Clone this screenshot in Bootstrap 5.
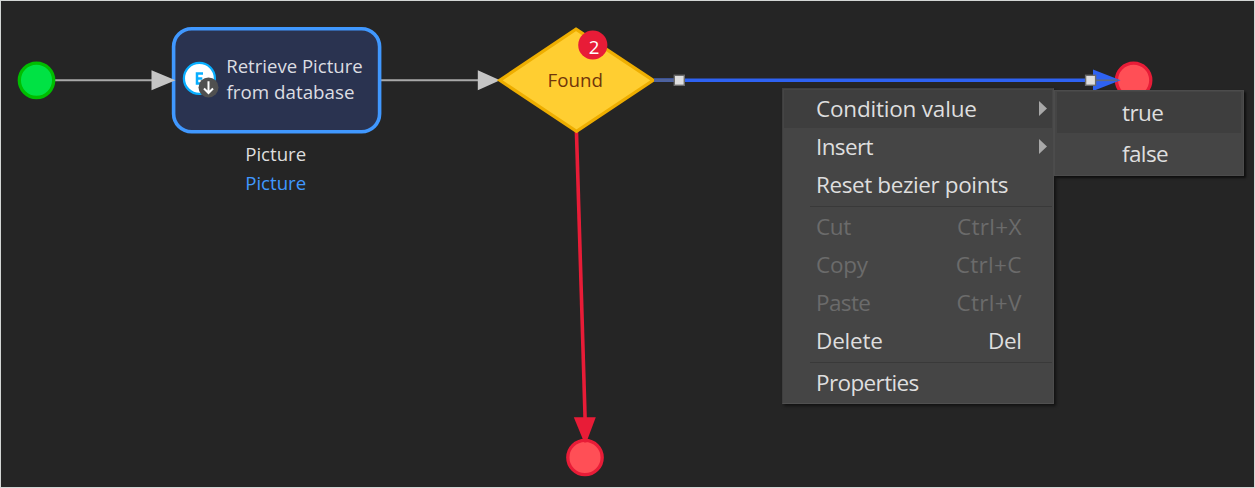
<!DOCTYPE html>
<html lang="en">
<head>
<meta charset="utf-8">
<meta name="viewport" content="width=device-width, initial-scale=1">
<title>Microflow editor</title>
<link rel="stylesheet" href="https://cdn.jsdelivr.net/npm/bootstrap@5.3.0/dist/css/bootstrap.min.css">
<style>
  body { background: #252525; font-family: "Open Sans", "Noto Sans", sans-serif; }
  .canvas { width: 1255px; height: 488px; background: #252525; border: 1px solid #d3d6d5; }
  .flow { left: -1px; top: -1px; }
  .flow text { font-size: 18.7px; }
  .ctx-menu { background: #454545; border: 1px solid #3e3e3e; border-right-color: #4c4c4c; border-bottom-color: #505050; box-shadow: 2px 2px 3px rgba(0,0,0,.55); color: #dedede; font-size: 22.5px; line-height: 1; }
  .ctx-main { left: 781px; top: 87px; width: 272px; height: 316px; padding: 1px; }
  .ctx-sub { left: 1053px; top: 89px; width: 190px; height: 86px; padding: 1px 2px; border-color: #4c4c4c; box-shadow: 2px 2px 2px rgba(0,0,0,.6); }
  .ctx-item { height: 37.8px; padding: 0 30.5px 0 32px; white-space: nowrap; letter-spacing: -.4px; }
  .ctx-sub .ctx-item { height: 41.3px; padding-left: 65px; }
  .ctx-item span { padding-top: 1.2px; }
  .ctx-item.hot { background: #3e3e3e; }
  .ctx-item.off { color: #6b6b6b; }
  .ctx-item.parent { padding-right: 5.5px; }
  .ctx-item .keys { letter-spacing: .3px; margin-right: -.2px; }
  .ctx-item .snug { letter-spacing: -.62px; }
  .ctx-item .loose { letter-spacing: -.2px; }
  .ctx-rule { height: 5px; margin-left: 26px; background: linear-gradient(#393939, #393939) 0 2.5px / 100% 1px no-repeat; }
</style>
</head>
<body>
<main class="canvas position-relative overflow-hidden">
  <svg class="flow position-absolute" width="1255" height="488" viewBox="0 0 1255 488">
    <!-- sequence flows -->
    <g stroke="#a9a9a9" stroke-width="2"><path d="M54 80.3H153M380 80.3H480"/></g>
    <circle cx="36.5" cy="80.3" r="17.2" fill="#00e244" stroke="#00bd00" stroke-width="3.3"/>
    <rect x="173.6" y="28.7" width="206" height="103" rx="18" fill="#2a3350" stroke="#4098ff" stroke-width="3.6"/>
    <path d="M151.5 70.2V90.2L175.5 80.3ZM477.8 70.2V90.2L500 80.3Z" fill="#c5c5c5"/>
    <!-- retrieve activity -->
    <circle cx="199.4" cy="78.4" r="15.5" fill="#fff" stroke="#08aeff" stroke-width="2.3"/>
    <path d="M203 73.6H197V83.4H203M197 78.5H202.3" fill="none" stroke="#08aeff" stroke-width="2.5"/>
    <circle cx="208.5" cy="87.4" r="10" fill="#505050"/>
    <path d="M208.5 81.2V92.5M204 88.5L208.5 93L213 88.5" fill="none" stroke="#fff" stroke-width="2"/>
    <text x="226.2" y="73.3" textLength="136.5" lengthAdjust="spacingAndGlyphs" fill="#dcdde2">Retrieve Picture</text>
    <text x="226.5" y="99.2" textLength="128" lengthAdjust="spacingAndGlyphs" fill="#dcdde2">from database</text>
    <text x="245.2" y="161.2" textLength="61" lengthAdjust="spacingAndGlyphs" fill="#dedede">Picture</text>
    <text x="245.2" y="190.3" textLength="61" lengthAdjust="spacingAndGlyphs" fill="#4098ff">Picture</text>
    <!-- error path -->
    <path d="M576.4 130L585.2 422" stroke="#e81c37" stroke-width="3.6"/>
    <circle cx="585" cy="457.5" r="17.2" fill="#ff4f56" stroke="#e81c37" stroke-width="3.3"/>
    <path d="M573.8 417.3H595.8L586.3 442.5H584.2Z" fill="#e81c37"/>
    <!-- decision -->
    <path d="M576 29.2L653.2 80.3L576.5 131.3L499.8 80.3Z" fill="#ffce31" stroke="#eeae00" stroke-width="3.2"/>
    <text x="547.6" y="87.3" textLength="55.4" lengthAdjust="spacingAndGlyphs" fill="#70350a">Found</text>
    <circle cx="592.8" cy="45" r="14.6" fill="#e81c37"/>
    <text x="588.7" y="53.6" fill="#fff">2</text>
    <!-- selected flow -->
    <circle cx="1133.6" cy="80.3" r="17.2" fill="#ff4f56" stroke="#e81c37" stroke-width="3.3"/>
    <path d="M654 80.2H1096" stroke="#2e62f2" stroke-width="3.6"/>
    <path d="M654 80.2H675" stroke="#50639b" stroke-width="3.4"/>
    <path d="M1093 69.5V91L1120.5 80.3Z" fill="#2e62f2"/>
    <path d="M1095 80.3H1118" stroke="#626b80" stroke-width="1.7"/>
    <g fill="#dfdfdf" stroke="#6c6c6c" stroke-width="1.4"><rect x="674.3" y="75.3" width="10" height="10"/><rect x="1085.6" y="75.3" width="10" height="10"/></g>
  </svg>

  <div class="ctx-menu ctx-main position-absolute d-flex flex-column">
    <div class="ctx-item parent hot d-flex align-items-center justify-content-between"><span class="loose">Condition value</span><svg width="8" height="15"><path d="M0 0L8 7.5L0 15Z" fill="#a8a8a8"/></svg></div>
    <div class="ctx-item parent d-flex align-items-center justify-content-between"><span class="snug">Insert</span><svg width="8" height="15"><path d="M0 0L8 7.5L0 15Z" fill="#a8a8a8"/></svg></div>
    <div class="ctx-item d-flex align-items-center"><span>Reset bezier points</span></div>
    <div class="ctx-rule"></div>
    <div class="ctx-item off d-flex align-items-center justify-content-between"><span>Cut</span><span class="keys">Ctrl+X</span></div>
    <div class="ctx-item off d-flex align-items-center justify-content-between"><span class="loose">Copy</span><span class="keys">Ctrl+C</span></div>
    <div class="ctx-item off d-flex align-items-center justify-content-between"><span class="snug">Paste</span><span class="keys">Ctrl+V</span></div>
    <div class="ctx-item d-flex align-items-center justify-content-between"><span class="loose">Delete</span><span>Del</span></div>
    <div class="ctx-rule"></div>
    <div class="ctx-item d-flex align-items-center"><span class="snug">Properties</span></div>
  </div>
  <div class="ctx-menu ctx-sub position-absolute d-flex flex-column">
    <div class="ctx-item hot d-flex align-items-center"><span class="snug">true</span></div>
    <div class="ctx-item d-flex align-items-center"><span class="snug">false</span></div>
  </div>
</main>
<script src="https://cdn.jsdelivr.net/npm/bootstrap@5.3.0/dist/js/bootstrap.bundle.min.js"></script>
</body>
</html>
